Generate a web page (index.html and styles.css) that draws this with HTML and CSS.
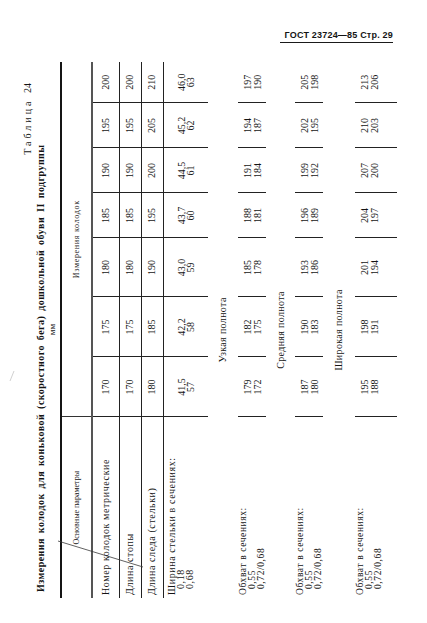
FILE: index.html
```html
<!DOCTYPE html>
<html lang="ru">
<head>
<meta charset="utf-8">
<title>ГОСТ 23724—85 Стр. 29</title>
<link rel="stylesheet" href="styles.css">
</head>
<body>
<div class="page">
  <header class="pagehead"><span class="runhead">ГОСТ 23724—85 Стр. 29</span></header>
  <div class="sheet">
    <div class="landscape">
      <div class="caption">
        <div class="tabno">Таблица <span class="num">24</span></div>
        <div class="title">Измерения колодок для коньковой (скоростного бега) дошкольной обуви II подгруппы</div>
        <div class="unit">мм</div>
      </div>
      <table class="grid">
        <colgroup>
          <col class="c-param"><col class="c60"><col class="c60"><col class="c59"><col class="c45"><col class="c45"><col class="c45"><col class="c41">
        </colgroup>
        <thead>
          <tr class="r-head"><th class="params">Основные параметры</th><th colspan="7" class="sizes">Измерения колодок</th></tr>
        </thead>
        <tbody class="upper">
          <tr class="r-num"><td class="p">Номер колодок метрические</td><td>170</td><td>175</td><td>180</td><td>185</td><td>190</td><td>195</td><td>200</td></tr>
          <tr class="r-foot"><td class="p">Длина стопы</td><td>170</td><td>175</td><td>180</td><td>185</td><td>190</td><td>195</td><td>200</td></tr>
          <tr class="r-sole"><td class="p">Длина следа (стельки)</td><td>180</td><td>185</td><td>190</td><td>195</td><td>200</td><td>205</td><td>210</td></tr>
          <tr class="r-width"><td class="p"><div>Ширина стельки в сечениях:</div><div class="ind">0,18</div><div class="ind">0,68</div></td><td>41,5<br>57</td><td>42,2<br>58</td><td>43,0<br>59</td><td>43,7<br>60</td><td>44,5<br>61</td><td>45,2<br>62</td><td>46,0<br>63</td></tr>
        </tbody>
        <tbody class="lower">
          <tr class="sect s1"><td colspan="8">Узкая полнота</td></tr>
          <tr class="data d1"><td class="p"><div>Обхват в сечениях:</div><div class="ind">0,55</div><div class="ind">0,72/0,68</div></td><td>179<br>172</td><td>182<br>175</td><td>185<br>178</td><td>188<br>181</td><td>191<br>184</td><td>194<br>187</td><td>197<br>190</td></tr>
          <tr class="sect s2"><td colspan="8">Средняя полнота</td></tr>
          <tr class="data d2"><td class="p"><div>Обхват в сечениях:</div><div class="ind">0,55</div><div class="ind">0,72/0,68</div></td><td>187<br>180</td><td>190<br>183</td><td>193<br>186</td><td>196<br>189</td><td>199<br>192</td><td>202<br>195</td><td>205<br>198</td></tr>
          <tr class="sect s3"><td colspan="8">Широкая полнота</td></tr>
          <tr class="data d3"><td class="p"><div>Обхват в сечениях:</div><div class="ind">0,55</div><div class="ind">0,72/0,68</div></td><td>195<br>188</td><td>198<br>191</td><td>201<br>194</td><td>204<br>197</td><td>207<br>200</td><td>210<br>203</td><td>213<br>206</td></tr>
        </tbody>
      </table>
    </div>
  </div>
  <svg class="marks" width="427" height="623" viewBox="0 0 427 623" aria-hidden="true">
    <line x1="58" y1="541" x2="143" y2="567" stroke="#3a3a3a" stroke-width="0.8"/>
    <line x1="10" y1="381" x2="14" y2="371" stroke="#c4c4c4" stroke-width="0.8"/>
  </svg>
</div>
</body>
</html>
```

FILE: styles.css
```css
html, body {
  margin: 0;
  padding: 0;
  background: #ffffff;
}

.page {
  position: relative;
  width: 427px;
  height: 623px;
  overflow: hidden;
  font-family: "Liberation Serif", "Times New Roman", serif;
  color: #141414;
}

.pagehead {
  display: flex;
  justify-content: flex-end;
  padding: 29px 34px 0 0;
}

.runhead {
  font-family: "Liberation Sans", Arial, sans-serif;
  font-weight: bold;
  font-size: 9px;
  line-height: 12px;
  width: 113px;
  text-align: right;
  letter-spacing: 0.2px;
  border-bottom: 1.5px solid #1a1a1a;
  padding-bottom: 1px;
}

.sheet {
  width: 385px;
  height: 555px;
  margin: 11.5px 0 0 15px;
}

.landscape {
  width: 555px;
  height: 385px;
  transform-origin: 0 0;
  transform: translate(0, 555px) rotate(-90deg);
}

.caption {
  padding: 7px 28px 0 18px;
}

.tabno {
  text-align: right;
  font-size: 10px;
  line-height: 12px;
  letter-spacing: 3px;
}

.tabno .num {
  letter-spacing: 0;
}

.title {
  font-weight: bold;
  font-size: 10px;
  line-height: 13px;
  letter-spacing: 0.45px;
  word-spacing: 2px;
  white-space: nowrap;
}

.unit {
  text-align: center;
  font-size: 9px;
  line-height: 10px;
  padding-left: 16px;
}

.grid {
  margin: 3px 0 0 12px;
  width: 536px;
  border-collapse: collapse;
  table-layout: fixed;
}

.c-param { width: 181px; }
.c60 { width: 60px; }
.c59 { width: 59px; }
.c45 { width: 45px; }
.c41 { width: 41px; }

.grid th,
.grid td {
  padding: 0;
  font-size: 10px;
  line-height: 10px;
  text-align: center;
  vertical-align: middle;
  white-space: nowrap;
}

.grid th {
  font-weight: normal;
  font-size: 8px;
  border-top: 2px solid #151515;
  border-bottom: 2px solid #555555;
}

.grid th.params {
  border-right: 1.5px solid #333333;
}

.grid th.sizes {
  letter-spacing: 0.7px;
}

.r-head { height: 31px; }
.r-num { height: 27px; }
.r-foot { height: 22px; }
.r-sole { height: 22px; }
.r-width { height: 45px; }
.s1 { height: 30px; }
.d1 { height: 27px; }
.s2 { height: 29px; }
.d2 { height: 28px; }
.s3 { height: 32px; }
.d3 { height: 42px; }

.upper tr:not(.r-width) td {
  border-bottom: 1.5px solid #222222;
}

.upper td + td,
.lower .data td + td {
  border-left: 1px solid #222222;
}

.grid td.p {
  text-align: left;
  padding-left: 3px;
  letter-spacing: 0.6px;
}

.r-width td {
  line-height: 9px;
}

.r-width td.p {
  vertical-align: top;
  padding-top: 3px;
}

.ind {
  padding-left: 6px;
}

.sect td {
  letter-spacing: 0.35px;
}

.lower .data td {
  vertical-align: top;
  padding-top: 5px;
}

.lower .data td.p {
  padding-top: 1px;
  font-size: 9.5px;
  line-height: 9px;
}

.marks {
  position: absolute;
  left: 0;
  top: 0;
  pointer-events: none;
}
```
